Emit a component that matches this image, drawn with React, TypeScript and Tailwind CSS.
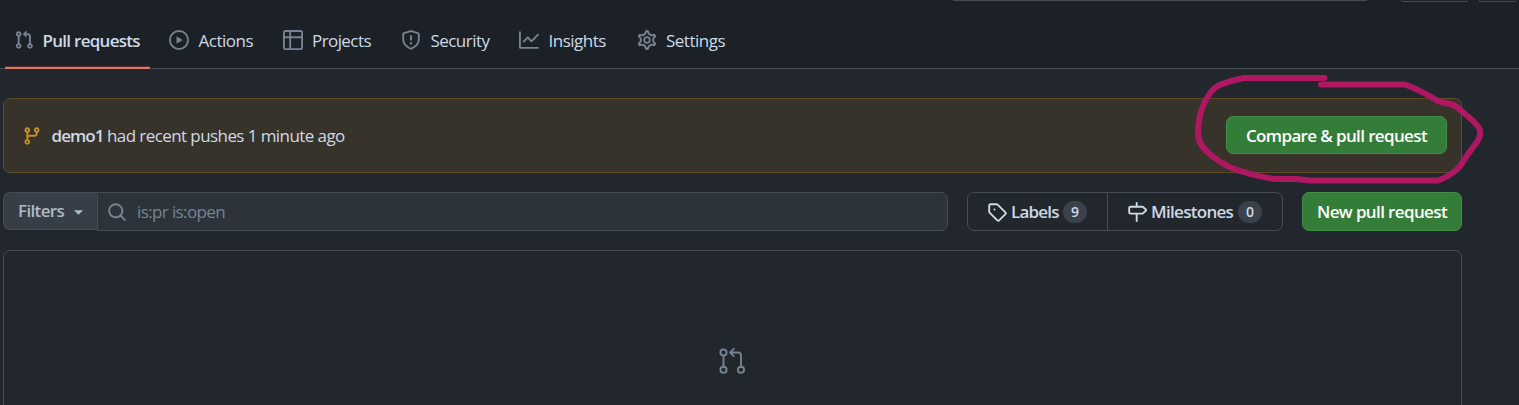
import type { ReactNode } from "react";

const paths = {
  pull: "M7.177 3.073L9.573.677A.25.25 0 0110 .854v4.792a.25.25 0 01-.427.177L7.177 3.427a.25.25 0 010-.354zM3.75 2.5a.75.75 0 100 1.5.75.75 0 000-1.5zm-2.25.75a2.25 2.25 0 113 2.122v5.256a2.251 2.251 0 11-1.5 0V5.372A2.25 2.25 0 011.5 3.25zM11 2.5h-1V4h1a1 1 0 011 1v5.628a2.251 2.251 0 101.5 0V5A2.5 2.5 0 0011 2.5zm1 10.25a.75.75 0 111.5 0 .75.75 0 01-1.5 0zM3.75 12a.75.75 0 100 1.5.75.75 0 000-1.5z",
  play: "M1.5 8a6.5 6.5 0 1113 0 6.5 6.5 0 01-13 0zM8 0a8 8 0 100 16A8 8 0 008 0zM6.379 5.227A.25.25 0 006 5.442v5.117a.25.25 0 00.379.214l4.264-2.559a.25.25 0 000-.428L6.379 5.227z",
  table: "M0 1.75C0 .784.784 0 1.75 0h12.5C15.216 0 16 .784 16 1.75v12.5A1.75 1.75 0 0114.25 16H1.75A1.75 1.75 0 010 14.25V1.75zM1.5 6.5v7.75c0 .138.112.25.25.25H5v-8H1.5zM5 5H1.5V1.75a.25.25 0 01.25-.25H5V5zm1.5 1.5v8h7.75a.25.25 0 00.25-.25V6.5h-8zM14.5 5h-8V1.5h7.75a.25.25 0 01.25.25V5z",
  shield: "M7.467.133a1.75 1.75 0 011.066 0l5.25 1.68A1.75 1.75 0 0115 3.48V7c0 1.566-.32 3.182-1.303 4.682-.983 1.498-2.585 2.813-5.032 3.855a1.7 1.7 0 01-1.33 0c-2.447-1.042-4.049-2.357-5.032-3.855C1.32 10.182 1 8.566 1 7V3.48a1.75 1.75 0 011.217-1.667l5.25-1.68zm.61 1.429a.25.25 0 00-.153 0l-5.25 1.68a.25.25 0 00-.174.238V7c0 1.358.275 2.666 1.057 3.86.784 1.194 2.121 2.34 4.366 3.297a.2.2 0 00.154 0c2.245-.956 3.582-2.104 4.366-3.298C13.225 9.666 13.5 8.36 13.5 7V3.48a.25.25 0 00-.174-.237l-5.25-1.68zM9 10.5a1 1 0 11-2 0 1 1 0 012 0zm-.25-5.75a.75.75 0 10-1.5 0v3a.75.75 0 001.5 0v-3z",
  graph: "M1.5 1.75a.75.75 0 00-1.5 0v12.5c0 .414.336.75.75.75h14.5a.75.75 0 000-1.5H1.5V1.75zm14.28 2.53a.75.75 0 00-1.06-1.06L10 7.94 7.53 5.47a.75.75 0 00-1.06 0L3.22 8.72a.75.75 0 001.06 1.06L7 7.06l2.47 2.47a.75.75 0 001.06 0l5.25-5.25z",
  branch: "M11.75 2.5a.75.75 0 100 1.5.75.75 0 000-1.5zm-2.25.75a2.25 2.25 0 113 2.122V6A2.5 2.5 0 0110 8.5H6a1 1 0 00-1 1v1.128a2.251 2.251 0 11-1.5 0V5.372a2.25 2.25 0 111.5 0v1.836A2.492 2.492 0 016 7h4a1 1 0 001-1v-.628A2.25 2.25 0 019.5 3.25zM4.25 12a.75.75 0 100 1.5.75.75 0 000-1.5zM3.5 3.25a.75.75 0 111.5 0 .75.75 0 01-1.5 0z",
  search: "M11.5 7a4.499 4.499 0 11-8.998 0A4.499 4.499 0 0111.5 7zm-.82 4.74a6 6 0 111.06-1.06l3.04 3.04a.75.75 0 11-1.06 1.06l-3.04-3.04z",
  tag: "M2.5 7.775V2.75a.25.25 0 01.25-.25h5.025a.25.25 0 01.177.073l6.25 6.25a.25.25 0 010 .354l-5.025 5.025a.25.25 0 01-.354 0l-6.25-6.25a.25.25 0 01-.073-.177zm-1.5 0V2.75C1 1.784 1.784 1 2.75 1h5.025c.464 0 .91.184 1.238.513l6.25 6.25a1.75 1.75 0 010 2.474l-5.026 5.026a1.75 1.75 0 01-2.474 0l-6.25-6.25A1.75 1.75 0 011 7.775zM6 5.2a.8.8 0 100 1.6.8.8 0 000-1.6z",
  milestone: "M7.75 0a.75.75 0 01.75.75V3h3.634c.414 0 .814.147 1.13.414l2.07 1.75a1.75 1.75 0 010 2.672l-2.07 1.75a1.75 1.75 0 01-1.13.414H8.5v5.25a.75.75 0 11-1.5 0V10H2.75A1.75 1.75 0 011 8.25v-3.5C1 3.784 1.784 3 2.75 3H7V.75A.75.75 0 017.75 0zm0 8.5h4.384a.25.25 0 00.161-.06l2.07-1.75a.25.25 0 000-.38l-2.07-1.75a.25.25 0 00-.161-.06H2.75a.25.25 0 00-.25.25v3.5c0 .138.112.25.25.25h5z",
};

function Icon({ name, className = "" }: { name: keyof typeof paths; className?: string }) {
  return (
    <svg viewBox="0 0 16 16" className={`size-5 shrink-0 ${className}`} fill="currentColor" fillRule="evenodd">
      <path d={paths[name]} />
    </svg>
  );
}

function Gear() {
  return (
    <svg viewBox="0 0 16 16" className="size-5 shrink-0" fill="none" stroke="currentColor" strokeWidth="1.4">
      <path
        transform="translate(8 8) scale(1.1) translate(-8 -8)"
        d="M7.429 1.525a6.593 6.593 0 011.142 0c.036.003.108.036.137.146l.289 1.105c.147.56.55.967.997 1.189.174.086.341.183.501.29.417.278.97.423 1.53.27l1.102-.303c.11-.03.175.016.195.046.219.31.41.641.573.989.014.031.022.11-.059.19l-.815.806c-.411.406-.562.957-.53 1.456a4.588 4.588 0 010 .582c-.032.499.119 1.05.53 1.456l.815.806c.08.08.073.159.059.19a6.494 6.494 0 01-.573.99c-.02.029-.086.074-.195.045l-1.103-.303c-.559-.153-1.112-.008-1.529.27-.16.107-.327.204-.5.29-.449.222-.851.628-.998 1.189l-.289 1.105c-.029.11-.101.143-.137.146a6.613 6.613 0 01-1.142 0c-.036-.003-.108-.037-.137-.146l-.289-1.105c-.147-.56-.55-.967-.997-1.189a4.502 4.502 0 01-.501-.29c-.417-.278-.97-.423-1.53-.27l-1.102.303c-.11.03-.175-.016-.195-.046a6.492 6.492 0 01-.573-.989c-.014-.031-.022-.11.059-.19l.815-.806c.411-.406.562-.957.53-1.456a4.587 4.587 0 010-.582c.032-.499-.119-1.05-.53-1.456l-.815-.806c-.08-.08-.073-.159-.059-.19a6.44 6.44 0 01.573-.99c.02-.029.086-.075.195-.045l1.103.303c.559.153 1.112.008 1.529-.27.16-.107.327-.204.5-.29.449-.222.851-.628.998-1.189l.289-1.105c.029-.11.101-.143.137-.146z"
      />
      <circle cx="8" cy="8" r="2.25" />
    </svg>
  );
}

function Tab({ icon, label, className }: { icon: ReactNode; label: string; className: string }) {
  return (
    <a className={`flex shrink-0 items-center gap-[9.5px] ${className}`}>
      <span className="text-[#768390]">{icon}</span>
      <span className="pt-[2px]">{label}</span>
    </a>
  );
}

function Count({ value }: { value: number }) {
  return (
    <span className="flex h-[22px] w-6 items-center justify-center rounded-full bg-[#3b424c] pt-px text-[14px]">{value}</span>
  );
}

export default function App() {
  return (
    <div className="relative h-[405px] w-[1519px] overflow-hidden bg-[#22272e] font-['Open_Sans','Noto_Sans',sans-serif] text-[17px] leading-6 whitespace-nowrap text-[#cdd9e5]">
      <header className="flex h-[69px] flex-col border-b border-[#444c56] bg-[#1c2128]">
        <div className="flex h-3 items-start pl-[953px]">
          <div className="h-px w-[414px] bg-[#444c56]" />
          <div className="ml-[34px] h-[2px] w-[67px] rounded-b-md border border-t-0 border-[#444c56]" />
          <div className="ml-[11px] h-[2px] w-[37px] rounded-b-md border border-t-0 border-[#444c56]" />
        </div>
        <nav className="flex h-14 items-stretch pl-[5px]">
          <a className="flex h-[57px] w-[145px] shrink-0 items-center gap-[8.5px] rounded-b-[1px] border-b-2 border-[#dc7a66] pl-[9px] font-semibold tracking-[-0.72px] shadow-[inset_0_-1px_0_#5a2f2c]">
            <Icon name="pull" className="text-[#768390]" />
            <span className="pt-[3px]">Pull requests</span>
          </a>
          <Tab className="ml-[19px] w-[113.5px] tracking-[-0.5px]" icon={<Icon name="play" />} label="Actions" />
          <Tab className="w-[118.5px] tracking-[-0.58px]" icon={<Icon name="table" />} label="Projects" />
          <Tab className="w-[118px] tracking-[-0.55px]" icon={<Icon name="shield" />} label="Security" />
          <Tab className="w-[117.5px] tracking-[-0.5px]" icon={<Icon name="graph" />} label="Insights" />
          <Tab className="tracking-[-0.5px]" icon={<Gear />} label="Settings" />
        </nav>
      </header>

      <main className="ml-[3px] flex w-[1459px] flex-col">
        <section className="mt-[29px] flex h-[75px] items-center rounded-[7px] border border-[#5e4b26] bg-[#37332a] pr-[14px] pl-[18px]">
          <Icon name="branch" className="text-[#c69026]" />
          <p className="ml-[9.5px] flex gap-[3.5px]">
            <strong className="font-semibold tracking-[-0.95px]">demo1</strong>
            <span className="tracking-[-0.58px]">had recent pushes 1 minute ago</span>
          </p>
          <button className="mb-[2px] ml-auto h-[38px] w-[221px] rounded-[7px] border border-[#468c4b] bg-[#347d39] pt-[2px] font-semibold tracking-[-0.63px] text-white">
            Compare &amp; pull request
          </button>
        </section>

        <section className="mt-[19px] flex h-[39px] items-start">
          <button className="flex h-[38px] w-[94px] items-center rounded-l-[7px] border border-r-0 border-[#444c56] bg-[#373e47] pl-[14px] font-semibold tracking-[-0.65px] text-[#adbac7]">
            Filters
            <svg viewBox="0 0 10 5" className="mt-[3px] ml-[10px] h-[5px] w-[9px]" fill="currentColor">
              <path d="M0 0h10L5 5z" />
            </svg>
          </button>
          <div className="flex h-[39px] w-[851px] items-center rounded-r-[7px] border border-[#444c56] bg-[#2d333b] pl-[9px]">
            <Icon name="search" className="text-[#768390]" />
            <span className="ml-[10px] tracking-[-0.62px] text-[#768390]">is:pr is:open</span>
          </div>
          <div className="ml-[19px] flex h-[39px] w-[316px] rounded-[7px] border border-[#444c56] font-semibold text-[#cdd9e5]">
            <a className="flex w-[140px] items-center border-r border-[#444c56] pl-[19px]">
              <Icon name="tag" />
              <span className="ml-1 w-[52px] tracking-[-0.8px]">Labels</span>
              <Count value={9} />
            </a>
            <a className="flex items-center pl-[19px]">
              <Icon name="milestone" />
              <span className="ml-1 w-[87px] tracking-[-0.7px]">Milestones</span>
              <Count value={0} />
            </a>
          </div>
          <button className="ml-[19px] h-[39px] w-[160px] rounded-[7px] border border-[#468c4b] bg-[#347d39] font-semibold tracking-[-0.62px] text-white">
            New pull request
          </button>
        </section>

        <section className="mt-[19px] flex h-[180px] justify-center rounded-t-[7px] border border-[#444c56] pt-[95px] pr-[2px]">
          <svg viewBox="0 0 30 30" className="size-[30px] text-[#768390]" fill="none" stroke="currentColor" strokeWidth="1.9">
            <circle cx="6.5" cy="6.5" r="3.1" />
            <circle cx="6.5" cy="23.8" r="3.1" />
            <circle cx="24" cy="23.8" r="3.1" />
            <path d="M6.500 9.600v11.100M24 20.700V9.500a3 3 0 0 0-3-3h-7.500M16.800 2.800l-3.700 3.700 3.700 3.700" strokeLinecap="round" strokeLinejoin="round" />
          </svg>
        </section>
      </main>

      {/* Freehand marker ring around the compare button */}
      <svg className="pointer-events-none absolute top-0 left-0 h-[405px] w-[1519px]" viewBox="0 0 1519 405" fill="none" stroke="#b01763" strokeWidth="6" strokeLinecap="round" strokeLinejoin="round">
        <path d="M1324.500 78H1244Q1224 82 1216 87C1205 96 1198 114 1198 133C1198 144 1205 150 1212 156Q1226 167 1240 171Q1258 177 1276 179H1296L1310 180.500H1438Q1453 175 1461 165Q1467 155 1474 146Q1483 135 1479 128Q1475 122 1465 114Q1456 105 1450 104L1438 101Q1420 90 1405 84.500H1321" />
      </svg>
    </div>
  );
}
